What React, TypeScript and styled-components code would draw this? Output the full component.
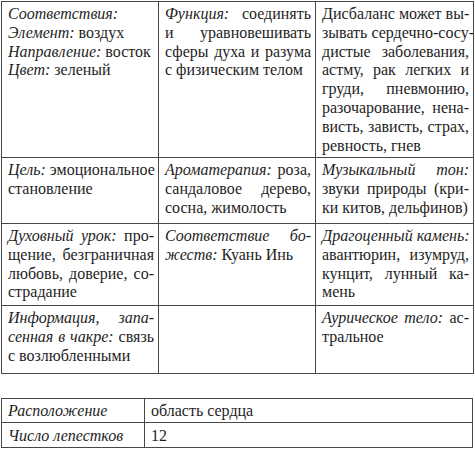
import React from 'react';
import styled, { createGlobalStyle } from 'styled-components';

const GlobalStyle = createGlobalStyle`
  html, body {
    margin: 0;
    padding: 0;
    background: #ffffff;
  }
  body {
    font-family: 'Liberation Serif', 'Times New Roman', serif;
    color: #1e1e1e;
  }
`;

type Part = { t: string; i?: boolean };
type CellData = { lines: Part[][]; justify?: boolean };

const p = (t: string, i = false): Part => ({ t, i });

const mainRows: { height: number; cells: CellData[] }[] = [
  {
    height: 156,
    cells: [
      {
        lines: [
          [p('Соответствия:', true)],
          [p('Элемент:', true), p(' воздух')],
          [p('Направление:', true), p(' восток')],
          [p('Цвет:', true), p(' зеленый')],
        ],
      },
      {
        justify: true,
        lines: [
          [p('Функция:', true), p(' соединять')],
          [p('и уравновешивать')],
          [p('сферы духа и разума')],
          [p('с физическим телом')],
        ],
      },
      {
        justify: true,
        lines: [
          [p('Дисбаланс может вы-')],
          [p('зывать сердечно-сосу-')],
          [p('дистые заболевания,')],
          [p('астму, рак легких и')],
          [p('груди, пневмонию,')],
          [p('разочарование, нена-')],
          [p('висть, зависть, страх,')],
          [p('ревность, гнев')],
        ],
      },
    ],
  },
  {
    height: 66,
    cells: [
      {
        justify: true,
        lines: [[p('Цель:', true), p(' эмоциональное')], [p('становление')]],
      },
      {
        justify: true,
        lines: [
          [p('Ароматерапия:', true), p(' роза,')],
          [p('сандаловое дерево,')],
          [p('сосна, жимолость')],
        ],
      },
      {
        justify: true,
        lines: [
          [p('Музыкальный тон:', true)],
          [p('звуки природы (кри-')],
          [p('ки китов, дельфинов)')],
        ],
      },
    ],
  },
  {
    height: 82,
    cells: [
      {
        justify: true,
        lines: [
          [p('Духовный урок:', true), p(' про-')],
          [p('щение, безграничная')],
          [p('любовь, доверие, со-')],
          [p('страдание')],
        ],
      },
      {
        justify: true,
        lines: [[p('Соответствие бо-', true)], [p('жеств:', true), p(' Куань Инь')]],
      },
      {
        justify: true,
        lines: [
          [p('Драгоценный камень:', true)],
          [p('авантюрин, изумруд,')],
          [p('кунцит, лунный ка-')],
          [p('мень')],
        ],
      },
    ],
  },
  {
    height: 68,
    cells: [
      {
        justify: true,
        lines: [
          [p('Информация, запа-', true)],
          [p('сенная в чакре:', true), p(' связь')],
          [p('с возлюбленными')],
        ],
      },
      { lines: [] },
      {
        justify: true,
        lines: [[p('Аурическое тело:', true), p(' ас-')], [p('тральное')]],
      },
    ],
  },
];

const Page = styled.div`
  width: 475px;
  padding: 1px 2px 0 1px;
  box-sizing: border-box;
  display: flex;
  flex-direction: column;
  gap: 24px;
`;

const Table = styled.table`
  width: 472px;
  border-collapse: collapse;
  table-layout: fixed;
  color: #1e1e1e;
`;

const Row = styled.tr<{ $h: number }>`
  height: ${(props) => props.$h}px;
`;

const Cell = styled.td`
  border: 1.5px solid #484848;
  vertical-align: top;
  padding: 3px 4px 1px 6px;
  font-family: 'Liberation Serif', 'Times New Roman', serif;
  font-size: 16px;
  line-height: 18.8px;
  overflow: hidden;
`;

const InfoCell = styled(Cell)`
  vertical-align: middle;
  padding: 1px 6px 0 6px;
  line-height: 20px;
`;

const Line = styled.div<{ $justify: boolean }>`
  white-space: nowrap;
  text-align: ${(props) => (props.$justify ? 'justify' : 'left')};
  text-align-last: ${(props) => (props.$justify ? 'justify' : 'left')};
`;

const Em = styled.i`
  font-style: italic;
`;

const renderLine = (parts: Part[]) =>
  parts.map((part, k) => (part.i ? <Em key={k}>{part.t}</Em> : <span key={k}>{part.t}</span>));

const App: React.FC = () => (
  <>
    <GlobalStyle />
    <Page>
      <Table>
        <colgroup>
          <col style={{ width: 157 }} />
          <col style={{ width: 157 }} />
          <col style={{ width: 158 }} />
        </colgroup>
        <tbody>
          {mainRows.map((row, r) => (
            <Row key={r} $h={row.height}>
              {row.cells.map((cell, c) => (
                <Cell key={c}>
                  {cell.lines.map((line, l) => (
                    <Line key={l} $justify={!!cell.justify && l < cell.lines.length - 1}>
                      {renderLine(line)}
                    </Line>
                  ))}
                </Cell>
              ))}
            </Row>
          ))}
        </tbody>
      </Table>
      <Table>
        <colgroup>
          <col style={{ width: 143 }} />
          <col />
        </colgroup>
        <tbody>
          <Row $h={24}>
            <InfoCell>
              <Em>Расположение</Em>
            </InfoCell>
            <InfoCell>область сердца</InfoCell>
          </Row>
          <Row $h={25}>
            <InfoCell>
              <Em>Число лепестков</Em>
            </InfoCell>
            <InfoCell>12</InfoCell>
          </Row>
        </tbody>
      </Table>
    </Page>
  </>
);

export default App;
